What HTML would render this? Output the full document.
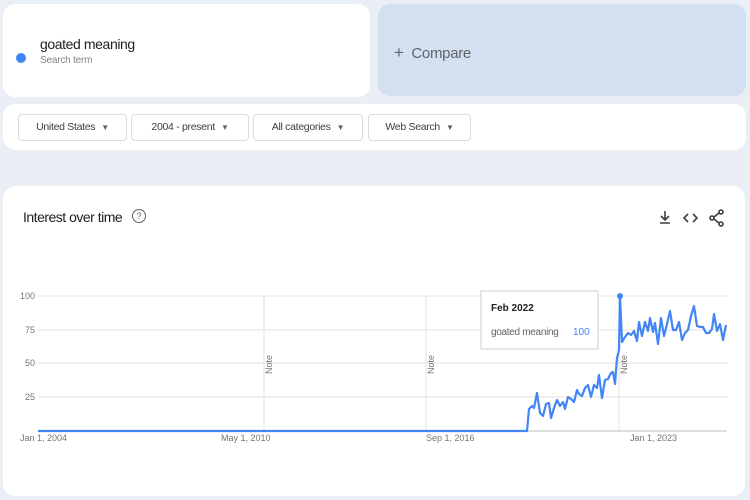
<!DOCTYPE html>
<html><head><style>
body{margin:0;width:750px;height:500px;background:#eaeff6;font-family:"Liberation Sans",sans-serif;position:relative;overflow:hidden}
.card{position:absolute;background:#fff;border-radius:12px}
.btn{position:absolute;top:114px;height:25px;border:1px solid #dadce0;border-radius:4px;font-size:10.5px;letter-spacing:-0.3px;color:#3c4043;line-height:25px;text-align:center;background:#fff}
.btn span{font-size:8px;margin-left:6px;color:#5f6368}
</style></head><body>
<div class="card" style="left:3px;top:4px;width:367px;height:93px"></div>
<div style="position:absolute;left:16px;top:53px;width:10px;height:10px;border-radius:50%;background:#4285f4"></div>
<div style="position:absolute;left:40px;top:36px;font-size:14px;letter-spacing:-0.4px;color:#202124">goated meaning</div>
<div style="position:absolute;left:40px;top:55px;font-size:10px;letter-spacing:-0.2px;color:#80868b">Search term</div>
<div class="card" style="left:378px;top:4px;width:368px;height:92px;background:#d3e0f2"></div>
<div style="position:absolute;left:394px;top:43px;font-size:15px;letter-spacing:-0.3px;color:#5f6368"><span style="font-size:17px">+</span>&nbsp;&nbsp;Compare</div>
<div class="card" style="left:3px;top:104px;width:743px;height:46px"></div>
<div class="btn" style="left:18px;width:107px">United States<span>▼</span></div>
<div class="btn" style="left:131px;width:116px">2004 - present<span>▼</span></div>
<div class="btn" style="left:253px;width:108px">All categories<span>▼</span></div>
<div class="btn" style="left:368px;width:101px">Web Search<span>▼</span></div>
<div class="card" style="left:3px;top:186px;width:742px;height:310px"></div>
<div style="position:absolute;left:23px;top:209px;font-size:14px;letter-spacing:-0.5px;color:#202124">Interest over time</div>
<div style="position:absolute;left:132px;top:209px;width:12px;height:12px;border:1.3px solid #5f6368;border-radius:50%;font-size:9px;line-height:12px;text-align:center;color:#5f6368">?</div>
<svg style="position:absolute;left:655px;top:208px" width="75" height="20" viewBox="0 0 75 20" fill="none" stroke="#3c4043" stroke-width="1.6">
<path d="M10 3v9M6 8l4 4 4-4M5 15h10"/>
<path d="M33 6l-4 4 4 4M38 6l4 4-4 4"/>
<circle cx="66" cy="4" r="2"/><circle cx="57" cy="10" r="2"/><circle cx="66" cy="16" r="2"/><path d="M59 9l5-4M59 11l5 4"/>
</svg>
<svg style="position:absolute;left:0;top:0" width="750" height="500">
<g stroke="#e0e0e0" stroke-width="1">
<line x1="38" y1="296" x2="727" y2="296"/><line x1="38" y1="330" x2="727" y2="330"/><line x1="38" y1="363" x2="727" y2="363"/><line x1="38" y1="397" x2="727" y2="397"/>
<line x1="264" y1="296" x2="264" y2="431"/><line x1="426" y1="296" x2="426" y2="431"/><line x1="619" y1="296" x2="619" y2="431"/>
</g>
<line x1="38" y1="431" x2="727" y2="431" stroke="#bdbdbd"/>
<g font-size="9" fill="#757575" font-family="Liberation Sans">
<text x="35" y="299" text-anchor="end">100</text><text x="35" y="333" text-anchor="end">75</text><text x="35" y="366" text-anchor="end">50</text><text x="35" y="400" text-anchor="end">25</text>
<text x="20" y="441">Jan 1, 2004</text><text x="221" y="441">May 1, 2010</text><text x="426" y="441">Sep 1, 2016</text><text x="630" y="441">Jan 1, 2023</text>
<text transform="translate(272,374) rotate(-90)">Note</text><text transform="translate(434,374) rotate(-90)">Note</text><text transform="translate(627,374) rotate(-90)">Note</text>
</g>
<polyline fill="none" stroke="#4285f4" stroke-width="2.2" stroke-linejoin="round" points="38,431 527,431 529,409 532,406 534,408 537,393 540,413 543,416 546,404 549,403 551,418 554,408 557,400 560,406 563,402 565,409 568,397 571,399 574,402 577,390 579,394 582,396 585,388 588,385 591,397 594,385 597,388 599,375 602,398 605,380 608,379 611,373 613,372 615,384 617,358 619,350 620,296 622,342 625,337 628,333 631,335 634,331 637,341 639,322 642,336 645,322 648,331 650,318 653,332 655,323 658,344 661,318 664,336 667,324 670,311 673,330 676,330 679,322 682,340 685,333 688,330 691,316 694,306 697,326 700,327 703,327 706,333 709,333 712,329 714,314 717,331 720,324 723,340 726,325"/>
<circle cx="620" cy="296" r="3" fill="#4285f4"/>
<rect x="481" y="291" width="117" height="58" fill="#fff" stroke="#ccc"/>
<text x="491" y="311" font-size="10" font-weight="bold" fill="#202124" font-family="Liberation Sans">Feb 2022</text>
<text x="491" y="335" font-size="10" fill="#5f6368" font-family="Liberation Sans" letter-spacing="-0.3">goated meaning</text>
<text x="573" y="335" font-size="10" fill="#4285f4" font-family="Liberation Sans">100</text>
</svg>
</body></html>
